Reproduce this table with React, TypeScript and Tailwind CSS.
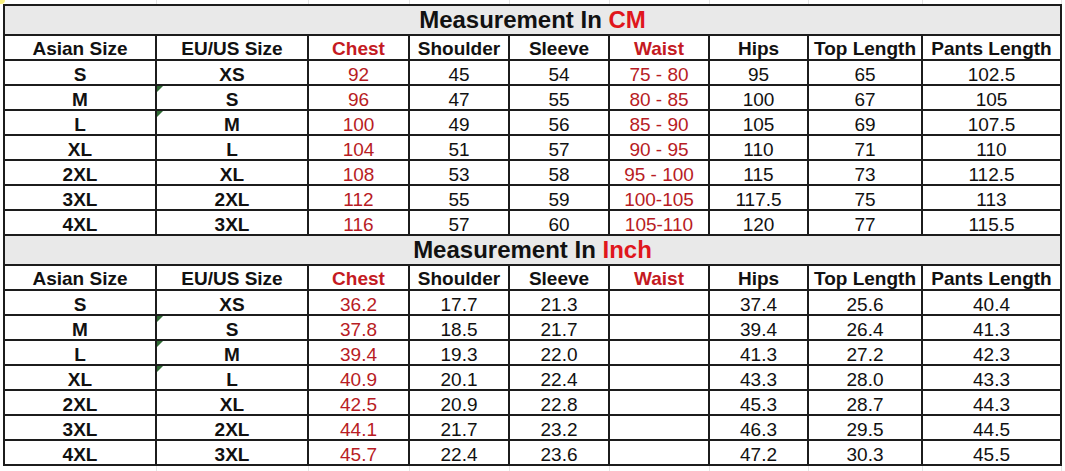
import React from "react";

const headers = [
  "Asian Size",
  "EU/US Size",
  "Chest",
  "Shoulder",
  "Sleeve",
  "Waist",
  "Hips",
  "Top Length",
  "Pants Length",
];

const cmRows = [
  ["S", "XS", "92", "45", "54", "75 - 80", "95", "65", "102.5"],
  ["M", "S", "96", "47", "55", "80 - 85", "100", "67", "105"],
  ["L", "M", "100", "49", "56", "85 - 90", "105", "69", "107.5"],
  ["XL", "L", "104", "51", "57", "90 - 95", "110", "71", "110"],
  ["2XL", "XL", "108", "53", "58", "95 - 100", "115", "73", "112.5"],
  ["3XL", "2XL", "112", "55", "59", "100-105", "117.5", "75", "113"],
  ["4XL", "3XL", "116", "57", "60", "105-110", "120", "77", "115.5"],
];

const inchRows = [
  ["S", "XS", "36.2", "17.7", "21.3", "", "37.4", "25.6", "40.4"],
  ["M", "S", "37.8", "18.5", "21.7", "", "39.4", "26.4", "41.3"],
  ["L", "M", "39.4", "19.3", "22.0", "", "41.3", "27.2", "42.3"],
  ["XL", "L", "40.9", "20.1", "22.4", "", "43.3", "28.0", "43.3"],
  ["2XL", "XL", "42.5", "20.9", "22.8", "", "45.3", "28.7", "44.3"],
  ["3XL", "2XL", "44.1", "21.7", "23.2", "", "46.3", "29.5", "44.5"],
  ["4XL", "3XL", "45.7", "22.4", "23.6", "", "47.2", "30.3", "45.5"],
];

const isRed = (i: number) => i === 2 || i === 5;

const gridCols =
  "grid grid-cols-[152px_152px_101px_100px_100px_100px_99px_114px_139px]";

// faint spreadsheet gridlines outside the table
const GhostRow: React.FC<{ h: string }> = ({ h }) => (
  <div className={`${gridCols} ${h} ml-[5px]`}>
    {headers.map((c) => (
      <div key={c} className="border-r border-[#e4e4e4]" />
    ))}
  </div>
);

const Section: React.FC<{
  unit: string;
  rows: string[][];
  marks: number[];
}> = ({ unit, rows, marks }) => (
  <>
    <div className="h-[30px] border-r-2 border-b-2 border-[#1c1c1c] bg-[#e9e9e9] flex items-center justify-center text-[24px] font-bold text-[#111] leading-none">
      Measurement In&nbsp;<span className="text-[#e0161c]">{unit}</span>
    </div>
    <div className={gridCols}>
      {headers.map((h, i) => (
        <div
          key={h}
          className={`h-[25px] border-r-2 border-b-2 border-[#1c1c1c] flex items-center justify-center text-[19px] font-bold leading-none whitespace-nowrap pt-[2px] ${
            isRed(i) ? "text-[#c41a22]" : "text-[#111]"
          }`}
        >
          {h}
        </div>
      ))}
    </div>
    {rows.map((r, ri) => (
      <div key={ri} className={gridCols}>
        {r.map((v, i) => (
          <div
            key={i}
            className={`relative h-[25px] border-r-2 border-b-2 border-[#1c1c1c] flex items-center justify-center text-[19px] leading-none pt-[4px] ${
              i < 2 ? "font-bold" : ""
            } ${isRed(i) ? "text-[#b81c24]" : "text-[#111]"}`}
          >
            {i === 1 && marks.includes(ri) && (
              <span className="absolute left-0 top-0 w-0 h-0 border-t-[6px] border-r-[6px] border-t-[#2f6b34] border-r-transparent" />
            )}
            {v}
          </div>
        ))}
      </div>
    ))}
  </>
);

export default function App() {
  return (
    <div
      className="relative w-[1065px] h-[471px] bg-white overflow-hidden"
      style={{ fontFamily: '"Liberation Sans", Arial, sans-serif' }}
    >
      <span className="absolute left-0 top-0 w-[5px] h-[4px] rounded-br-full bg-[#f5e94a] opacity-70" />
      <GhostRow h="h-[4px]" />
      <div className="ml-[3px] w-[1059px] border-l-2 border-t-2 border-[#1c1c1c]">
        <Section unit="CM" rows={cmRows} marks={[1, 2]} />
        <Section unit="Inch" rows={inchRows} marks={[1, 2, 3]} />
      </div>
      <GhostRow h="h-[6px]" />
    </div>
  );
}
